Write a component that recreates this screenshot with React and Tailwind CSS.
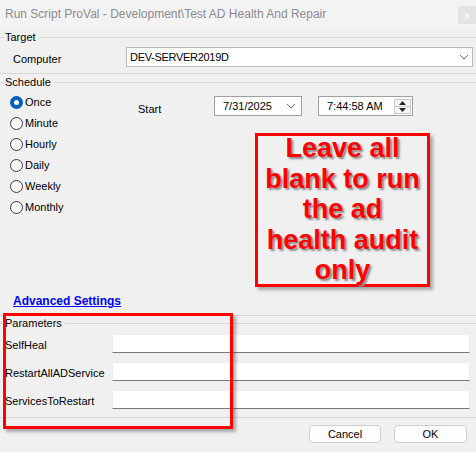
import React from 'react';

const Legend = ({ label, className = '' }) => (
  <div className={`flex items-center ${className}`}>
    <div className="w-[4px] h-px bg-[#d7d7d7]" />
    <span className="px-[1px] leading-none">{label}</span>
    <div className="flex-1 h-px bg-[#d7d7d7] ml-[2px]" />
  </div>
);

const Radio = ({ label, checked }) => (
  <div className="flex items-center h-[21px]">
    {checked ? (
      <div className="w-[13px] h-[13px] rounded-full bg-[#005fb8] flex items-center justify-center">
        <div className="w-[5px] h-[5px] rounded-full bg-white" />
      </div>
    ) : (
      <div className="w-[13px] h-[13px] rounded-full border border-[#3c3c3c] bg-[#f7f7f7]" />
    )}
    <span className="ml-[2px]">{label}</span>
  </div>
);

const Chevron = () => (
  <svg width="10" height="6" viewBox="0 0 10 6" className="shrink-0">
    <path d="M1 1 L5 5 L9 1" fill="none" stroke="#6b6b6b" strokeWidth="1" />
  </svg>
);

const ParamRow = ({ label }) => (
  <div className="flex items-center h-[19px]">
    <span className="w-[112px] pl-[5px] pt-[3px] leading-none">{label}</span>
    <div className="w-[358px] h-[19px] bg-white border border-[#ececec] border-b-[#7a7a7a]" />
  </div>
);

export default function App() {
  const radios = ['Once', 'Minute', 'Hourly', 'Daily', 'Weekly', 'Monthly'];

  return (
    <div className="relative w-[476px] h-[452px] bg-[#f0f0f0] overflow-hidden text-[11px] text-black font-['Liberation_Sans',Arial,sans-serif]">
      {/* title bar */}
      <div className="h-[28px] bg-[#f3f3f3] flex justify-between">
        <span className="pl-[5px] pt-[7px] text-[12px] leading-[15px] text-[#8c8c8c]">
          Run Script ProVal - Development\Test AD Health And Repair
        </span>
        <div className="mt-[6px] w-[18px] h-[18px] bg-[#e4e4e4] text-white text-[11px] flex items-center justify-center">
          x
        </div>
      </div>

      {/* target */}
      <Legend label="Target" className="h-[18px]" />
      <div className="flex items-center h-[20px] mt-[1px]">
        <span className="w-[126px] pl-[13px] pt-[4px]">Computer</span>
        <div className="w-[347px] h-[20px] bg-white border border-[#b9b9b9] flex items-center justify-between pl-[3px] pr-[3px]">
          <span className="tracking-[-0.3px]">DEV-SERVER2019D</span>
          <Chevron />
        </div>
      </div>
      <div className="mt-[6px] h-px bg-[#d7d7d7]" />

      {/* schedule */}
      <Legend label="Schedule" className="h-[16px]" />
      <div className="flex h-[202px]">
        <div className="w-[138px] pl-[10px] pt-[2px]">
          {radios.map((r, i) => (
            <Radio key={r} label={r} checked={i === 0} />
          ))}
        </div>
        <div className="pt-[6px]">
          <div className="flex items-start h-[20px]">
            <span className="w-[76px] pt-[8px] leading-none">Start</span>
            <div className="w-[88px] h-[20px] bg-white border border-[#a0a0a0] flex items-center justify-between pl-[8px] pr-[5px]">
              <span>7/31/2025</span>
              <Chevron />
            </div>
            <div className="ml-[16px] w-[95px] h-[20px] bg-white border border-[#a0a0a0] flex items-center justify-between pl-[8px] pr-[1px]">
              <span>7:44:58 AM</span>
              <div className="w-[17px] h-[15px] flex flex-col border border-[#c8c8c8]">
                <div className="flex-1 flex items-center justify-center border-b border-[#c8c8c8] bg-[#f5f5f5]">
                  <svg width="7" height="4" viewBox="0 0 7 4">
                    <path d="M0 4 L3.5 0 L7 4 Z" fill="#222" />
                  </svg>
                </div>
                <div className="flex-1 flex items-center justify-center bg-[#f5f5f5]">
                  <svg width="7" height="4" viewBox="0 0 7 4">
                    <path d="M0 0 L3.5 4 L7 0 Z" fill="#222" />
                  </svg>
                </div>
              </div>
            </div>
          </div>
        </div>
      </div>

      {/* advanced settings */}
      <div className="h-[18px] flex items-center pl-[13px]">
        <span className="font-bold text-[12px] text-[#0000ee] underline underline-offset-1">Advanced Settings</span>
      </div>
      <div className="mt-[5px] h-px bg-[#d7d7d7]" />

      {/* parameters */}
      <Legend label="Parameters" className="h-[15px]" />
      <div className="flex flex-col gap-[9px] mt-[3px]">
        <ParamRow label="SelfHeal" />
        <ParamRow label="RestartAllADService" />
        <ParamRow label="ServicesToRestart" />
      </div>
      <div className="mt-[8px] h-px bg-[#d7d7d7]" />

      {/* buttons */}
      <div className="flex justify-end gap-[13px] pr-[9px] mt-[7px]">
        <button className="w-[72px] h-[18px] bg-[#fdfdfd] border border-[#cfcfcf] rounded-[4px] leading-none">Cancel</button>
        <button className="w-[73px] h-[18px] bg-[#fdfdfd] border border-[#cfcfcf] rounded-[4px] leading-none">OK</button>
      </div>

      {/* annotations */}
      <div className="absolute left-[255px] top-[133px] w-[175px] h-[154px] border-[3px] border-[#ff0000] shadow-[3px_3px_3px_rgba(0,0,0,0.3)] text-center text-[#ff0000] font-bold text-[27px] leading-[30.5px] [text-shadow:2px_2px_2px_#8a8a8a]">
        <div className="-mt-[3px]">
          Leave all<br />blank to run<br />the ad<br />health audit<br />only
        </div>
      </div>
      <div className="absolute left-[3px] top-[313px] w-[230px] h-[116px] border-[3px] border-[#ff0000] shadow-[3px_3px_3px_rgba(0,0,0,0.3)]" />
    </div>
  );
}
